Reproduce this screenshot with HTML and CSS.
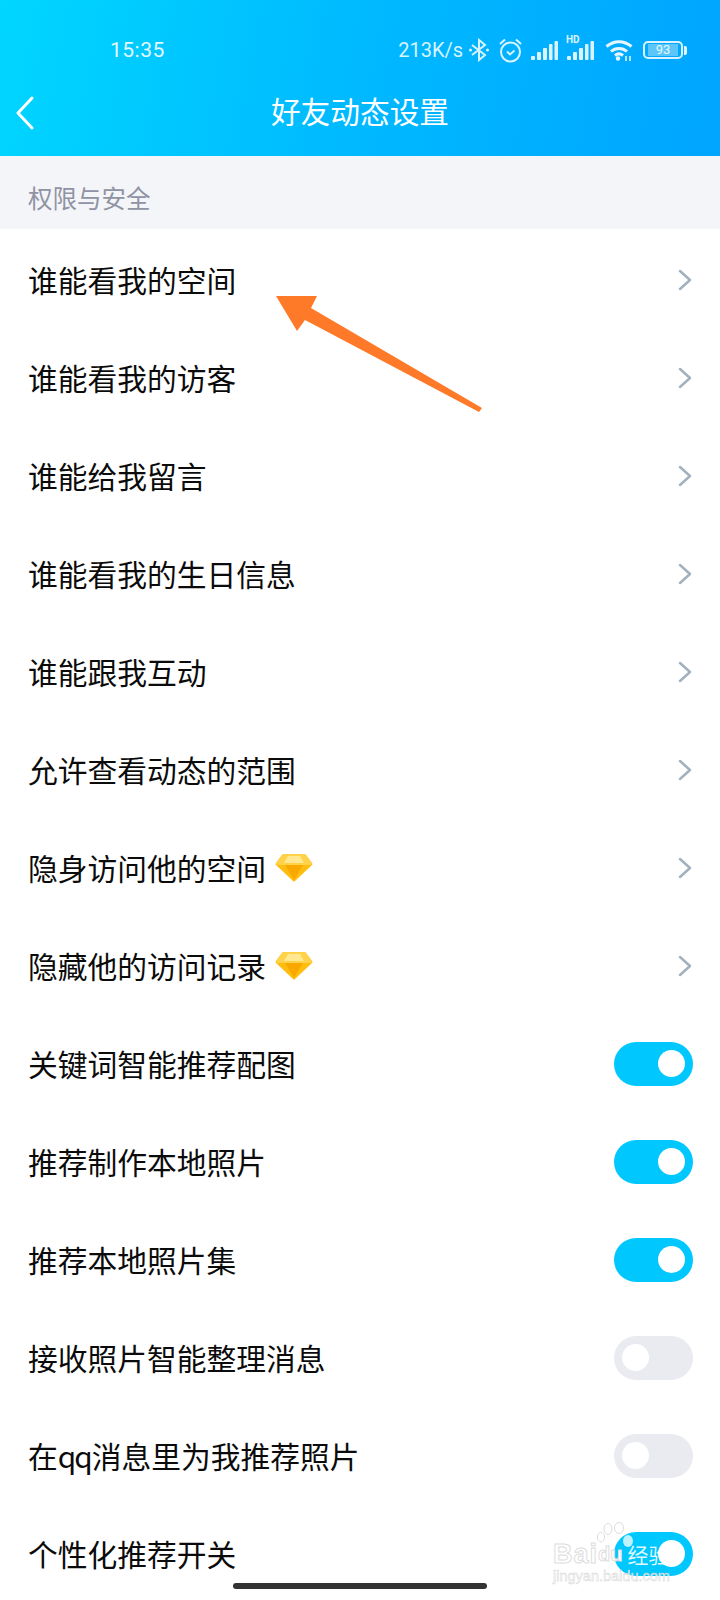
FILE: index.html
```html
<!DOCTYPE html>
<html lang="zh-CN">
<head>
    <meta charset="UTF-8">
    <title>好友动态设置</title>
    <link rel="stylesheet" href="styles.css">
</head>
<body>
    <div id="main">
        <div id="top">
            <div class="status">
                <span class="time">15:35</span>
                <div class="status-right">
                    <span class="speed">213K/s</span>
                    <!-- bluetooth -->
                    <svg class="ic bt" width="20" height="24" viewBox="0 0 20 24" fill="none" stroke="#d9f3ff" stroke-width="2"><path d="M3 7l13 10-6 5V2l6 5L3 17"/><circle cx="1.500" cy="12" r="1.500" fill="#d9f3ff" stroke="none"/><circle cx="18.500" cy="12" r="1.500" fill="#d9f3ff" stroke="none"/></svg>
                    <!-- alarm -->
                    <svg class="ic clock" width="23" height="25" viewBox="0 0 23 25" fill="none" stroke="#d9f3ff" stroke-width="2"><circle cx="11.500" cy="14" r="9.500"/><path d="M8 13.500l3 3 4.500-4M1 6l5-4.500M22 6l-5-4.500"/></svg>
                    <!-- signal -->
                    <svg class="ic sig" width="27" height="21" viewBox="0 0 27 21" fill="#d9f3ff"><rect x="0" y="16" width="4" height="4" rx="1"/><rect x="6" y="12" width="4" height="8" rx="1"/><rect x="12" y="8" width="4" height="12" rx="1"/><rect x="18" y="4" width="3.500" height="16" rx="1"/><rect x="23.500" y="1" width="3.500" height="19" rx="1"/></svg>
                    <!-- signal hd -->
                    <div class="hd-sig">
                        <span class="hd">HD</span>
                        <svg width="27" height="21" viewBox="0 0 27 21" fill="#d9f3ff"><rect x="0" y="16" width="4" height="4" rx="1"/><rect x="6" y="12" width="4" height="8" rx="1"/><rect x="12" y="8" width="4" height="12" rx="1"/><rect x="18" y="4" width="3.500" height="16" rx="1"/><rect x="23.500" y="1" width="3.500" height="19" rx="1"/></svg>
                    </div>
                    <!-- wifi -->
                    <svg class="ic wifi" width="28" height="24" viewBox="0 0 28 24" fill="none" stroke="#e6f7ff" stroke-width="3"><path d="M1.500 8.500c7.500-6.500 17.500-6.500 25 0M6 13.500c4.500-4 11.500-4 16 0M10 17.500c2.500-2 5.500-2 8 0"/><circle cx="13" cy="20.500" r="2.200" fill="#e6f7ff" stroke="none"/><path d="M21 18v5M25 18v5" stroke-width="1.500"/></svg>
                    <div class="battery">
                        <div class="batt-box"><span class="batt-num">93</span></div>
                        <div class="batt-cap"></div>
                    </div>
                </div>
            </div>
            <div class="nav">
                <svg class="back" width="20" height="34" viewBox="0 0 20 34" fill="none" stroke="#fff" stroke-width="3" stroke-linecap="round" stroke-linejoin="round"><path d="M17 2L3 17l14 15"/></svg>
                <span class="title">好友动态设置</span>
            </div>
        </div>

        <div class="section">权限与安全</div>

        <div class="list">
            <div class="row"><span class="label">谁能看我的空间</span><svg class="chev" width="14" height="22" viewBox="0 0 14 22"><path d="M2 2l10 9-10 9"/></svg></div>
            <div class="row"><span class="label">谁能看我的访客</span><svg class="chev" width="14" height="22" viewBox="0 0 14 22"><path d="M2 2l10 9-10 9"/></svg></div>
            <div class="row"><span class="label">谁能给我留言</span><svg class="chev" width="14" height="22" viewBox="0 0 14 22"><path d="M2 2l10 9-10 9"/></svg></div>
            <div class="row"><span class="label">谁能看我的生日信息</span><svg class="chev" width="14" height="22" viewBox="0 0 14 22"><path d="M2 2l10 9-10 9"/></svg></div>
            <div class="row"><span class="label">谁能跟我互动</span><svg class="chev" width="14" height="22" viewBox="0 0 14 22"><path d="M2 2l10 9-10 9"/></svg></div>
            <div class="row"><span class="label">允许查看动态的范围</span><svg class="chev" width="14" height="22" viewBox="0 0 14 22"><path d="M2 2l10 9-10 9"/></svg></div>
            <div class="row">
                <span class="label">隐身访问他的空间</span>
                <svg class="gem" width="38" height="30" viewBox="0 0 38 30"><path d="M9 1h20q1 0 2 1l6 8q1 1 0 2L20 28q-1 1-2 0L1 12q-1-1 0-2l6-8q1-1 2-1z" fill="#ffbe0f"/><path d="M9 1h20q1 0 2 1l6 8-1 2H2l-1-2 6-8q1-1 2-1z" fill="#ffd24a"/><path d="M13 3h12l4 7H9z" fill="#ffe88f"/><path d="M10 12h18l-9 15z" fill="#f9a800"/></svg>
                <svg class="chev" width="14" height="22" viewBox="0 0 14 22"><path d="M2 2l10 9-10 9"/></svg>
            </div>
            <div class="row">
                <span class="label">隐藏他的访问记录</span>
                <svg class="gem" width="38" height="30" viewBox="0 0 38 30"><path d="M9 1h20q1 0 2 1l6 8q1 1 0 2L20 28q-1 1-2 0L1 12q-1-1 0-2l6-8q1-1 2-1z" fill="#ffbe0f"/><path d="M9 1h20q1 0 2 1l6 8-1 2H2l-1-2 6-8q1-1 2-1z" fill="#ffd24a"/><path d="M13 3h12l4 7H9z" fill="#ffe88f"/><path d="M10 12h18l-9 15z" fill="#f9a800"/></svg>
                <svg class="chev" width="14" height="22" viewBox="0 0 14 22"><path d="M2 2l10 9-10 9"/></svg>
            </div>
            <div class="row"><span class="label">关键词智能推荐配图</span><div class="switch on"><div class="knob"></div></div></div>
            <div class="row"><span class="label">推荐制作本地照片</span><div class="switch on"><div class="knob"></div></div></div>
            <div class="row"><span class="label">推荐本地照片集</span><div class="switch on"><div class="knob"></div></div></div>
            <div class="row"><span class="label">接收照片智能整理消息</span><div class="switch"><div class="knob"></div></div></div>
            <div class="row"><span class="label">在<span class="qq">qq</span>消息里为我推荐照片</span><div class="switch"><div class="knob"></div></div></div>
            <div class="row"><span class="label">个性化推荐开关</span><div class="switch on"><div class="knob"></div></div></div>
        </div>

        <!-- orange arrow drawn on top of the shot -->
        <svg class="arrow" width="720" height="500" viewBox="0 0 720 500"><polygon points="276,296 317,296 311,308 482,408 479,412 305,320 297,331" fill="#ff7a28"/></svg>

        <!-- baidu watermark -->
        <div class="mark">
            <svg class="paw" width="38" height="26" viewBox="0 0 38 26" fill="#fff" fill-opacity="0.75" stroke="#ddd" stroke-width="1"><ellipse cx="4" cy="15" rx="3.500" ry="5"/><ellipse cx="11" cy="7" rx="4" ry="5.500"/><ellipse cx="22" cy="6" rx="4.500" ry="5.500"/><ellipse cx="31" cy="19" rx="5" ry="6" stroke="none"/></svg>
            <div class="mark-top"><span class="bai">Bai</span><span class="du">du</span><span class="jy">经验</span></div>
            <div class="mark-sub">jingyan.baidu.com</div>
        </div>

        <div class="home"></div>
    </div>
</body>
</html>
```

FILE: styles.css
```css
*{
    box-sizing: border-box;
    margin: 0px;
    padding: 0px;
}
body{
    background-color: #fff;
    font-family: "Noto Sans CJK SC", "Noto Sans", sans-serif;
}
#main{
    position: relative;
    width: 720px;
    height: 1600px;
    overflow: hidden;
    background-color: #fff;
}
#top{
    height: 156px;
    background: linear-gradient(100deg, #00d6ff 0%, #00b9ff 50%, #00a5ff 100%);
    color: #fff;
}
.status{
    height: 90px;
    padding: 32px 33px 0px 110px;
    display: flex;
    justify-content: space-between;
    align-items: flex-start;
}
.time{
    font-family: Roboto, sans-serif;
    font-size: 21px;
    line-height: 36px;
    letter-spacing: 0.5px;
    color: #e4f8ff;
}
.status-right{
    display: flex;
    align-items: center;
    height: 36px;
    color: #d9f3ff;
}
.speed{
    font-family: Roboto, sans-serif;
    font-size: 20px;
    margin-right: 6px;
}
.bt{
    margin-right: 10px;
}
.clock{
    margin-right: 9px;
}
.sig{
    margin-right: 9px;
}
.hd-sig{
    position: relative;
    width: 27px;
    height: 21px;
    margin-right: 11px;
}
.hd-sig svg{
    display: block;
}
.hd{
    position: absolute;
    left: -1px;
    top: -5px;
    font-family: Roboto, sans-serif;
    font-size: 10px;
    font-weight: 700;
    line-height: 10px;
    background-color: #0ab0ff;
    padding-right: 1px;
}
.wifi{
    margin-right: 10px;
}
.battery{
    display: flex;
    align-items: center;
}
.batt-box{
    width: 40px;
    height: 18px;
    border: 2px solid #d9f3ff;
    border-radius: 5px;
    background-color: #5cc6fb;
    background-clip: content-box;
    padding: 1px 3px;
    display: flex;
    align-items: center;
    justify-content: center;
}
.batt-num{
    font-family: Roboto, sans-serif;
    font-size: 13px;
    line-height: 12px;
    color: #e4f8ff;
}
.batt-cap{
    width: 3px;
    height: 9px;
    margin-left: 1px;
    border-radius: 0px 2px 2px 0px;
    background-color: #d9f3ff;
}
.nav{
    position: relative;
    height: 66px;
    display: flex;
    align-items: center;
    justify-content: center;
    padding-bottom: 24px;
}
.back{
    position: absolute;
    left: 15px;
    top: 6px;
}
.title{
    font-size: 29.700px;
    line-height: 40px;
    color: #fff;
}
.section{
    height: 73px;
    padding-left: 28px;
    padding-top: 10px;
    display: flex;
    align-items: center;
    background-color: #f4f5f9;
    color: #8f93a3;
    font-size: 24.500px;
}
.list{
    padding-top: 2px;
    background-color: #fff;
}
.row{
    height: 98px;
    padding: 0px 27px 0px 28px;
    display: flex;
    align-items: center;
}
.label{
    font-size: 29.750px;
    color: #0b0b0b;
    line-height: 40px;
    padding-bottom: 2px;
}
.qq{
    letter-spacing: -2px;
    margin-right: 1px;
}
.chev{
    margin-left: auto;
    margin-right: 1px;
    fill: none;
    stroke: #a3b0bd;
    stroke-width: 2.500;
    stroke-linecap: round;
    stroke-linejoin: round;
}
.gem{
    margin-left: 9px;
}
.switch{
    margin-left: auto;
    width: 79px;
    height: 44px;
    padding: 8px;
    border-radius: 22px;
    background-color: #e9ebf0;
    display: flex;
    justify-content: flex-start;
}
.switch.on{
    background-color: #00c8ff;
    justify-content: flex-end;
}
.knob{
    width: 27px;
    height: 27px;
    border-radius: 50%;
    background-color: #fff;
}
.arrow{
    position: absolute;
    left: 0px;
    top: 0px;
}
.mark{
    position: absolute;
    left: 552px;
    top: 1520px;
    width: 140px;
    height: 65px;
    color: #fff;
}
.paw{
    position: absolute;
    left: 45px;
    top: 2px;
}
.mark-top{
    position: absolute;
    left: 1px;
    top: 22px;
    height: 24px;
    display: flex;
    align-items: center;
    white-space: nowrap;
    line-height: 24px;
}
.bai{
    font-family: "Liberation Sans", sans-serif;
    font-size: 27px;
    font-weight: 700;
    letter-spacing: 1px;
    color: #fff;
    -webkit-text-stroke: 1px #ddd;
}
.du{
    font-family: "Liberation Sans", sans-serif;
    font-size: 20px;
    font-weight: 700;
    color: #fff;
    -webkit-text-stroke: 1px #ddd;
}
.jy{
    font-size: 21px;
    margin-left: 5px;
    color: rgba(255, 255, 255, 0.9);
}
.mark-sub{
    position: absolute;
    left: 1px;
    top: 49px;
    line-height: 14px;
    font-family: "Liberation Sans", sans-serif;
    font-size: 14.500px;
    white-space: nowrap;
    color: rgba(255, 255, 255, 0.85);
    -webkit-text-stroke: 0.4px #ccc;
}
.home{
    position: absolute;
    left: 233px;
    top: 1583px;
    width: 254px;
    height: 6px;
    border-radius: 3px;
    background-color: #333;
}
```
